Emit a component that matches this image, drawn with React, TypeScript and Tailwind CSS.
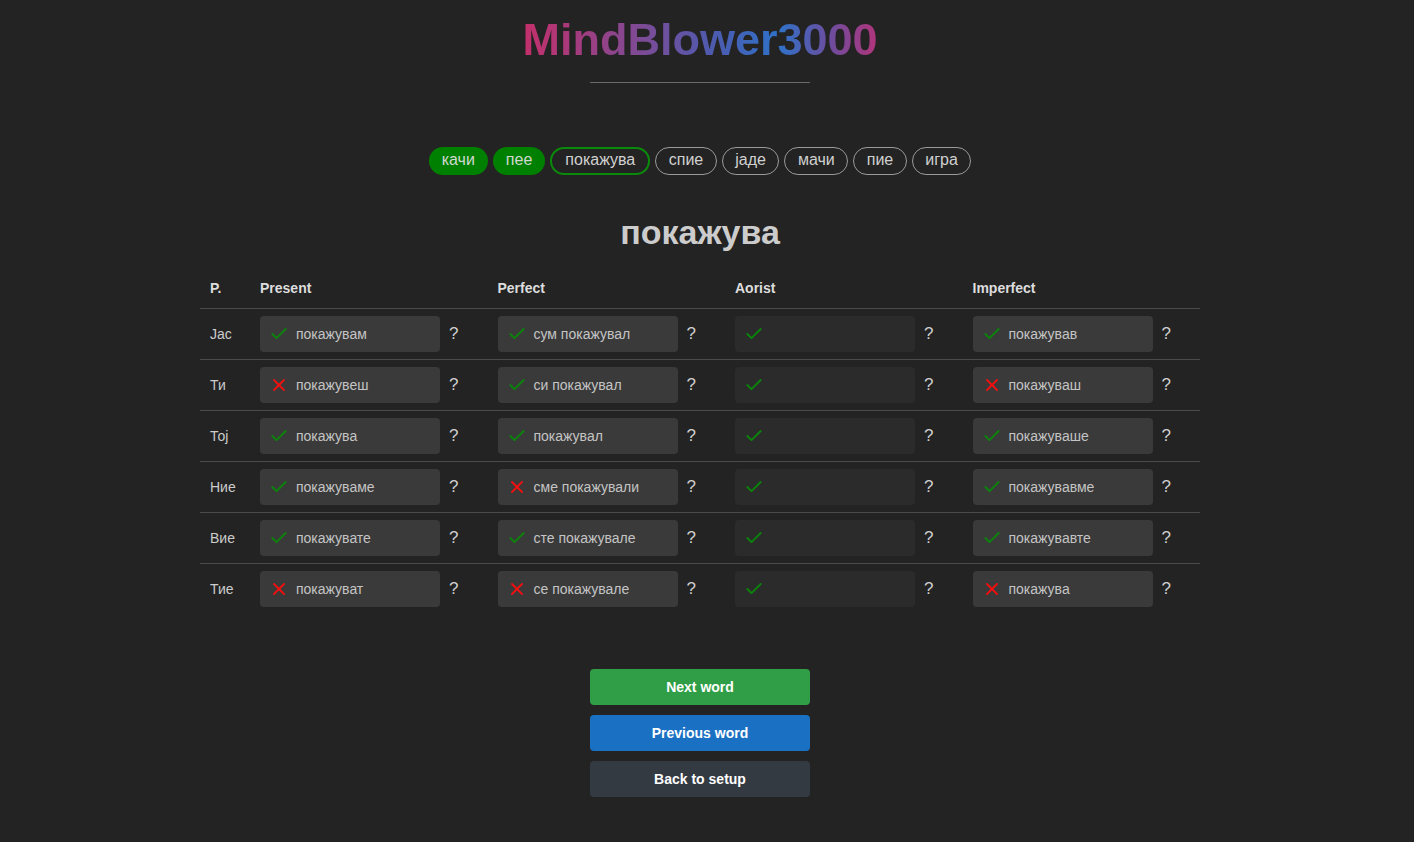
import React from 'react';
import { Check, X } from 'lucide-react';

type Cell = { text: string; ok: boolean };

const verbs = ['качи', 'пее', 'покажува', 'спие', 'јаде', 'мачи', 'пие', 'игра'];

const persons = ['Јас', 'Ти', 'Тој', 'Ние', 'Вие', 'Тие'];

const present: Cell[] = [
    { text: 'покажувам', ok: true },
    { text: 'покажувеш', ok: false },
    { text: 'покажува', ok: true },
    { text: 'покажуваме', ok: true },
    { text: 'покажувате', ok: true },
    { text: 'покажуват', ok: false },
];

const perfect: Cell[] = [
    { text: 'сум покажувал', ok: true },
    { text: 'си покажувал', ok: true },
    { text: 'покажувал', ok: true },
    { text: 'сме покажували', ok: false },
    { text: 'сте покажувале', ok: true },
    { text: 'се покажувале', ok: false },
];

const aorist: Cell[] = persons.map(() => ({ text: '', ok: true }));

const imperfect: Cell[] = [
    { text: 'покажував', ok: true },
    { text: 'покажуваш', ok: false },
    { text: 'покажуваше', ok: true },
    { text: 'покажувавме', ok: true },
    { text: 'покажувавте', ok: true },
    { text: 'покажува', ok: false },
];

const columns = [present, perfect, aorist, imperfect];

const AnswerBox: React.FC<{ cell: Cell }> = ({ cell }) => (
    <div className="flex items-center">
        <div
            className={`w-[180px] h-[36px] rounded-[4px] flex items-center pl-[9px] gap-[7px] ${cell.text ? 'bg-[#3a3a3a]' : 'bg-[#2b2b2b]'}`}
        >
            {cell.ok ? (
                <Check className="w-[20px] h-[20px] text-[#0a850a]" strokeWidth={2.2} />
            ) : (
                <X className="w-[20px] h-[20px] text-[#f01010]" strokeWidth={2.2} />
            )}
            <span className="text-[14px] text-[#c4c4c4]">{cell.text}</span>
        </div>
        <span className="ml-[9px] text-[17px] text-[#cfcfcf]">?</span>
    </div>
);

export default function App() {
    return (
        <div className="min-h-screen w-full bg-[#232323] flex flex-col items-center pr-[14px] pb-[60px] font-['Liberation_Sans',Arial,sans-serif]">
            {/* Title */}
            <h1
                className="pt-[13px] text-[45px] leading-[54px] font-bold bg-clip-text text-transparent bg-[linear-gradient(90deg,#c42f6a_0%,#7a4c98_35%,#4a5cb0_55%,#2f72c8_72%,#6a4ea0_86%,#b2347a_100%)]"
            >
                MindBlower3000
            </h1>
            <div className="mt-[15px] w-[220px] border-t border-[#6a6a6a]" />

            {/* Verb pills */}
            <div className="mt-[64px] flex items-center gap-[5px]">
                {verbs.map((v, i) => (
                    <span
                        key={v}
                        className={`h-[28px] pb-[2px] rounded-full flex items-center text-[16px] ${
                            i < 2
                                ? 'px-[13px] bg-[#008000] text-[#d0d8d0]'
                                : i === 2
                                ? 'px-[13px] border-2 border-[#0a8a0a] text-[#d0d0d0]'
                                : 'px-[12.5px] border border-[#9a9a9a] text-[#d0d0d0]'
                        }`}
                    >
                        {v}
                    </span>
                ))}
            </div>

            {/* Current verb */}
            <h2 className="mt-[37px] text-[34px] leading-[40px] font-bold text-[#cccccc]">покажува</h2>

            {/* Conjugation table */}
            <table className="mt-[16px] w-[1000px] table-fixed border-collapse">
                <colgroup>
                    <col className="w-[50px]" />
                    <col />
                    <col />
                    <col />
                    <col />
                </colgroup>
                <thead>
                    <tr className="border-b border-[#4a4a4a]">
                        {['P.', 'Present', 'Perfect', 'Aorist', 'Imperfect'].map(h => (
                            <th key={h} className="px-[10px] py-[10px] text-left text-[14px] leading-[20px] font-bold text-[#dddddd]">
                                {h}
                            </th>
                        ))}
                    </tr>
                </thead>
                <tbody>
                    {persons.map((p, r) => (
                        <tr key={p} className={r < persons.length - 1 ? 'border-b border-[#4a4a4a]' : ''}>
                            <td className="px-[10px] py-[7px] text-[14px] text-[#cccccc]">{p}</td>
                            {columns.map((col, c) => (
                                <td key={c} className="px-[10px] py-[7px]">
                                    <AnswerBox cell={col[r]} />
                                </td>
                            ))}
                        </tr>
                    ))}
                </tbody>
            </table>

            {/* Actions */}
            <div className="mt-[55px] flex flex-col gap-[10px] w-[220px]">
                <button className="h-[36px] rounded-[4px] bg-[#2f9e46] text-white text-[14px] font-bold">Next word</button>
                <button className="h-[36px] rounded-[4px] bg-[#1a70c2] text-white text-[14px] font-bold">Previous word</button>
                <button className="h-[36px] rounded-[4px] bg-[#343a42] text-white text-[14px] font-bold">Back to setup</button>
            </div>
        </div>
    );
}
